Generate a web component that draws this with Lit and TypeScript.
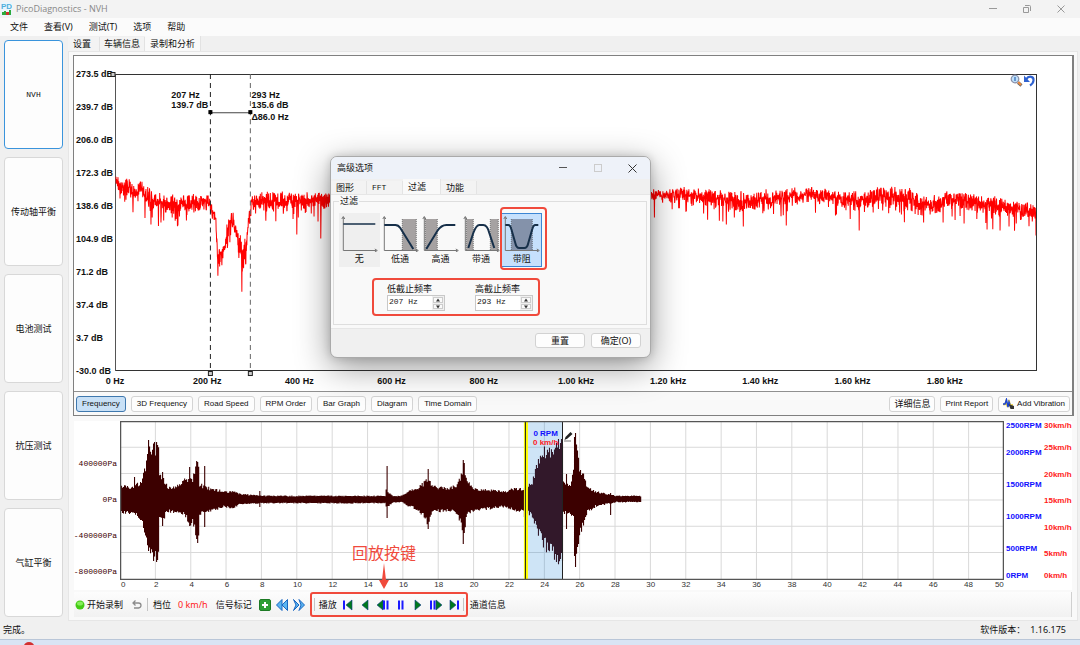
import { LitElement, html, css, svg } from "lit";
import { customElement, property } from "lit/decorators.js";
import { classMap } from "lit/directives/class-map.js";

type Knot = [number, number, number];

/** Small seeded generator, so that the traces look the same on every load. */
function seeded(seed: number) {
  let s = seed;
  return () => {
    s = (s * 1664525 + 1013904223) % 4294967296;
    return s / 4294967296;
  };
}

function sample(knots: Knot[], x: number): [number, number] {
  for (let i = 1; i < knots.length; i++) {
    if (x <= knots[i][0]) {
      const a = knots[i - 1];
      const b = knots[i];
      const t = (x - a[0]) / (b[0] - a[0] || 1);
      return [a[1] + (b[1] - a[1]) * t, a[2] + (b[2] - a[2]) * t];
    }
  }
  const last = knots[knots.length - 1];
  return [last[1], last[2]];
}

/* Spectrum: position, mean level, spread. */
const SPECTRUM: Knot[] = [
  [0, 106, 7], [5, 112, 8], [10, 108, 9], [16, 116, 8], [21, 119, 7], [25, 108, 8], [29, 120, 8],
  [38, 124, 8], [50, 128, 8], [70, 127, 8], [92, 127, 7], [97, 134, 7], [100, 148, 7],
  [102, 186, 7], [105, 176, 12], [109, 170, 10], [112, 152, 8], [116, 140, 8], [118, 148, 6],
  [121, 158, 9], [125, 176, 14], [129, 178, 14], [131, 165, 10], [133, 146, 9], [136, 126, 8],
  [150, 125, 8], [170, 125, 7], [195, 124, 7], [225, 126, 8], [300, 124, 7], [450, 123, 6],
  [540, 120, 5], [566, 119, 6], [585, 121, 6], [606, 124, 8], [645, 126, 9], [668, 121, 7],
  [690, 119, 6], [710, 120, 6], [745, 125, 7], [766, 119, 8], [786, 122, 9], [806, 127, 9],
  [823, 129, 7], [830, 122, 6], [850, 126, 8], [876, 129, 8], [896, 133, 8], [905, 136, 8],
  [922, 134, 8],
];
const DROPS: [number, number][] = [
  [126, 217], [102, 201], [181, 160], [205, 164], [539, 143], [611, 150], [628, 152], [671, 151],
  [744, 156], [828, 148], [849, 149], [872, 155], [885, 156], [921, 161], [62, 151], [35, 150],
];

function spectrumPath(): string {
  const rnd = seeded(77);
  let d = "";
  for (let x = 0; x <= 921.5; x += 0.25) {
    const [mean, spread] = sample(SPECTRUM, x);
    let y = mean + 1 + (rnd() + rnd() - 1) * spread * 1.35;
    if (rnd() > 0.92) y = mean + spread + rnd() * rnd() * 19;
    const drop = DROPS.find((p) => p[0] === x);
    if (drop) y = drop[1];
    d += `${x === 0 ? "M" : "L"}${x} ${y.toFixed(1)}`;
  }
  return d;
}

/* Sound pressure: position, upper edge, lower edge. */
const PRESSURE: Knot[] = [
  [0, 66, 91], [8, 67, 91], [14, 65, 91], [19, 63, 96], [22, 59, 100], [26, 45, 115], [28, 33, 127],
  [30, 36, 128], [33, 30, 134], [37, 28, 138], [38, 34, 129], [39, 57, 95], [42, 57, 99],
  [46, 65, 90], [50, 68, 90], [59, 65, 90], [64, 60, 93], [68, 61, 99], [70, 58, 105],
  [72, 60, 96], [75, 46, 112], [78, 48, 112], [79, 64, 92], [84, 67, 90], [94, 69, 88],
  [104, 71, 85], [112, 71, 87], [119, 73, 83], [139, 75, 82], [264, 75, 82], [265, 70, 86],
  [268, 72, 84], [272, 75, 81], [280, 75, 81], [289, 70, 85], [297, 68, 88], [304, 62, 96],
  [307, 56, 104], [311, 66, 90], [324, 68, 89], [334, 66, 89], [339, 59, 98], [342, 48, 112],
  [346, 62, 92], [354, 69, 88], [369, 70, 87], [384, 71, 85], [394, 68, 89], [404, 69, 89],
  [411, 62, 94], [416, 46, 108], [422, 32, 120], [428, 32, 127], [435, 26, 134], [441, 18, 136],
  [442, 62, 90], [449, 64, 92], [452, 50, 98], [454, 16, 142], [456, 33, 125], [459, 53, 108],
  [463, 58, 101], [466, 67, 90], [474, 71, 85], [484, 73, 83], [494, 75, 81], [520, 75, 81],
];
const PEAKS: Record<number, [number, number]> = {
  28: [19, 130], 36: [21, 141], 37: [24, 139], 42: [51, 105], 69: [46, 105], 76: [40, 118],
  77: [41, 122], 84: [45, 106], 266: [45, 97], 307: [48, 108], 342: [39, 123], 343: [42, 112],
  435: [22, 141], 440: [18, 132], 439: [22, 138], 445: [53, 108], 454: [12, 146], 453: [16, 135],
  139: [70, 86], 14: [56, 92], 489: [72, 94], 403: [67, 96],
};

function pressurePath(): string {
  const rnd = seeded(5);
  let d = "";
  for (let x = 0; x < 520; x++) {
    const [top, bottom] = sample(PRESSURE, x);
    const peak = PEAKS[x];
    const jag = (bottom - top) * 0.16;
    const hi = peak ? peak[0] : top + (rnd() - 0.6) * jag;
    const lo = peak ? peak[1] : bottom - (rnd() - 0.6) * jag;
    d += `M${x + 0.5} ${hi.toFixed(1)}V${lo.toFixed(1)}`;
  }
  return d;
}

const SANS = css`"Noto Sans", "Noto Sans CJK SC", sans-serif`;

@customElement("frequency-plot")
export class FrequencyPlot extends LitElement {
  static styles = css`
    :host { display: grid; grid-template-columns: 41px 1fr 35px; grid-template-rows: 1fr 20px; padding-top: 18px; background: #fff; font: bold 9px/10px "Liberation Sans", sans-serif; color: #111; }
    .levels { display: flex; flex-direction: column; justify-content: space-between; padding-left: 2px; white-space: nowrap; }
    .levels span { height: 0; display: flex; align-items: center; }
    .plot { position: relative; min-height: 0; border-left: 1px solid #555; }
    svg.trace { position: absolute; inset: 0; width: 100%; height: 100%; overflow: visible; }
    .hz { grid-column: 2; display: flex; justify-content: space-between; align-items: center; }
    .hz span { width: 0; display: flex; justify-content: center; white-space: nowrap; }
    .note { position: absolute; top: 16px; white-space: nowrap; }
    .note p { margin: 0; }
    .low { left: 6%; }
    .high { left: 14.7%; }
    .delta { padding-top: 2px; }
    .tools { position: absolute; top: 0; right: 1px; display: flex; }
    .tools button { border: 0; padding: 0; background: none; width: 13px; height: 13px; }
    .tools svg { display: block; }
  `;

  render() {
    const levels = ["273.5 dB", "239.7 dB", "206.0 dB", "172.3 dB", "138.6 dB", "104.9 dB", "71.2 dB", "37.4 dB", "3.7 dB", "-30.0 dB"];
    const hz = ["0 Hz", "200 Hz", "400 Hz", "600 Hz", "800 Hz", "1.00 kHz", "1.20 kHz", "1.40 kHz", "1.60 kHz", "1.80 kHz", ""];
    return html`
      <div class="levels">${levels.map((l) => html`<span>${l}</span>`)}</div>
      <div class="plot">
        <svg class="trace" viewBox="0 0 922 296" preserveAspectRatio="none" aria-hidden="true">
          <path d=${spectrumPath()} fill="none" stroke="#f00" stroke-width="1" stroke-linejoin="bevel" />
          <path d="M0 .5H921.5V296M0 295.5H922" fill="none" stroke="#333" />
          <path d="M94.500 0V296" stroke="#222" stroke-dasharray="5 4" />
          <path d="M134.500 0V296" stroke="#666" stroke-dasharray="5 4" />
          <path d="M95 38.500H134" stroke="#444" />
          <rect x="92.500" y="36" width="4" height="4" /><rect x="132.500" y="36" width="4" height="4" />
          <g fill="#ccc" stroke="#222"><rect x="-5" y="-1.500" width="4" height="4" /><rect x="92.500" y="296.500" width="4" height="4" /><rect x="132.500" y="296.500" width="4" height="4" /></g>
        </svg>
        <div class="note low"><p>207 Hz</p><p>139.7 dB</p></div>
        <div class="note high"><p>293 Hz</p><p>135.6 dB</p><p class="delta">Δ86.0 Hz</p></div>
        <div class="tools">
          <button aria-label="缩放"><svg width="13" height="13" viewBox="0 0 13 13"><path d="M8 8.500l3.500 3" stroke="#666" stroke-width="3"/><path d="M8 8l3 3" stroke="#f08a3c" stroke-width="2"/><circle cx="5" cy="5" r="3.800" fill="#bfe0fa" stroke="#8a90a8" stroke-width="1.200"/><path d="M5 3v4" stroke="#3a70b8" stroke-width="1.300"/></svg></button>
          <button aria-label="撤销"><svg width="13" height="13" viewBox="0 0 13 13"><path d="M3 5.500C6 1 11 2.500 10.500 6.500Q10.200 9.500 7 11.500" fill="none" stroke="#2f62d0" stroke-width="2.200"/><path d="M1 1.500V8h6z" fill="#2f62d0"/></svg></button>
        </div>
      </div>
      <div></div>
      <div class="hz">${hz.map((l) => html`<span>${l}</span>`)}</div>`;
  }
}

@customElement("time-plot")
export class TimePlot extends LitElement {
  static styles = css`
    :host { display: grid; grid-template-columns: 46px 1fr 68px; grid-template-rows: 159px 10px; background: #fff; }
    .pa { display: flex; flex-direction: column; justify-content: space-between; padding: 42px 3px 8px 0; font: 8px/9px "Liberation Mono", monospace; color: #3c0000; }
    .pa span { height: 0; display: flex; align-items: center; justify-content: flex-end; white-space: nowrap; }
    .plot { position: relative; }
    svg.trace { display: block; width: 100%; height: 100%; }
    .seconds { grid-column: 2; display: flex; justify-content: space-between; font: 8px/10px "Liberation Sans", sans-serif; color: #333; }
    .seconds span { width: 0; display: flex; justify-content: center; }
    .seconds span:first-child { justify-content: flex-start; padding-left: 1px; }
    .seconds span:last-child { justify-content: flex-end; }
    .scales { display: grid; grid-template-columns: 1fr 28px; padding-left: 2px; font: bold 8px/9px "Liberation Sans", sans-serif; }
    .scale { display: flex; flex-direction: column; justify-content: space-between; }
    .scale span { height: 0; display: flex; align-items: center; }
    .scale span:first-child { align-items: flex-start; }
    .scale span:last-child { align-items: flex-end; }
    .rpm, .scale.rpm { color: #1010ff; }
    .kmh { color: #ff1a1a; }
    .reading { position: absolute; left: 46%; top: 8px; width: 38px; font: bold 8px/9px "Liberation Sans", sans-serif; text-align: center; white-space: nowrap; }
    .reading p { margin: 0; }
    .hint { position: absolute; left: 232px; top: 122px; width: 64px; display: flex; flex-direction: column; align-items: center; color: #f04a3c; font: 16px/20px ${SANS}; white-space: nowrap; }
  `;

  render() {
    const grid: unknown[] = [];
    for (let i = 1; i < 25; i++) grid.push(svg`<path d="M${(i * 35.28).toFixed(1)} 0V158"/>`);
    for (let i = 1; i < 6; i++) grid.push(svg`<path d="M0 ${(i * 26.3).toFixed(1)}H882"/>`);
    const seconds = Array.from({ length: 26 }, (_, i) => i * 2);
    return html`
      <div class="pa"><span>400000Pa</span><span>0Pa</span><span>-400000Pa</span><span>-800000Pa</span></div>
      <div class="plot">
        <svg class="trace" viewBox="0 0 882 159" preserveAspectRatio="none" aria-hidden="true">
          <g stroke="#d9d9d9">${grid}</g>
          <path d=${pressurePath()} stroke="#3c0000" stroke-width="1.100" fill="none" />
          <rect x="407" y="1" width="35" height="157" fill="#0a78d0" opacity=".2" />
          <rect x="403" y="1" width="4" height="158" fill="#ff0" />
          <path d="M404.500 1V158M441.500 1V158" stroke="#222" />
          <path d="M.5 159V.5H881.500V158.500H0" fill="none" stroke="#555" stroke-width="1.500" />
          <path d="M443.500 19l1-3 5-5 2 2-5 4.500z" fill="#222" /><path d="M443 20h7" stroke="#777" />
        </svg>
        <div class="reading"><p class="rpm">0 RPM</p><p class="kmh">0 km/h</p></div>
        <div class="hint">回放按键<svg width="10" height="26" viewBox="0 0 10 26"><path d="M5 0L7 17H10L5 26 0 17H3z" fill="#f04a3c" /></svg></div>
      </div>
      <div class="scales">
        <div class="scale rpm">${[2500, 2000, 1500, 1000, 500, 0].map((v) => html`<span>${v}RPM</span>`)}</div>
        <div class="scale kmh">${[30, 25, 20, 15, 10, 5, 0].map((v) => html`<span>${v}km/h</span>`)}</div>
      </div>
      <div class="seconds">${seconds.map((s) => html`<span>${s}</span>`)}</div>`;
  }
}

const BARS = svg`<path d="M1 1.500V10.500M4.500 1.500V10.500" stroke="#1a1aff" stroke-width="2"/>`;
const TRANSPORT: [string, unknown][] = [
  ["跳到开头", svg`<path d="M2 1.500V10.500" stroke="#1a1aff" stroke-width="2"/><path d="M10 1V11L4 6z" fill="#007a1c" stroke="#123a8a" stroke-width=".6"/>`],
  ["倒放", svg`<path d="M9 1V11L3 6z" fill="#007a1c" stroke="#123a8a" stroke-width=".6"/>`],
  ["后退一步", svg`<path d="M6 1V11L0 6z" fill="#007a1c" stroke="#123a8a" stroke-width=".6"/><g transform="translate(6)">${BARS}</g>`],
  ["暂停", svg`<g transform="translate(3)">${BARS}</g>`],
  ["播放", svg`<path d="M3 1V11L9 6z" fill="#007a1c" stroke="#123a8a" stroke-width=".6"/>`],
  ["前进一步", svg`<g>${BARS}</g><path d="M6 1V11L12 6z" fill="#007a1c" stroke="#123a8a" stroke-width=".6"/>`],
  ["跳到结尾", svg`<path d="M2 1V11L8 6z" fill="#007a1c" stroke="#123a8a" stroke-width=".6"/><path d="M10 1.500V10.500" stroke="#1a1aff" stroke-width="2"/>`],
];

@customElement("playback-bar")
export class PlaybackBar extends LitElement {
  static styles = css`
    :host { display: flex; align-items: center; height: 25px; font: 9px/12px ${SANS}; color: #111; background: linear-gradient(#fdfdfd, #f1f1f1); border-right: 1px solid #d0d0d0; }
    button { font: inherit; color: inherit; border: 0; background: none; padding: 0; display: flex; align-items: center; white-space: nowrap; }
    svg { display: block; flex: none; }
    .record { gap: 2px; padding-left: 1px; }
    .undo { margin-left: 9px; }
    .sep { width: 1px; height: 13px; background: #c4c4c4; }
    .undo + .sep { margin: 0 5px; }
    .speed { color: #f22; margin: 0 8px 0 7px; }
    .mark { margin-right: 7px; }
    .jump { margin-right: 5px; }
    .group { box-sizing: border-box; width: 158px; height: 25px; border: 2px solid #f04a3c; border-radius: 3px; display: flex; align-items: center; padding: 0 2px; white-space: nowrap; }
    .group > span { margin: 0 2px 0 4px; }
    .group button { flex: 1; justify-content: center; }
    .info { margin-left: 2px; }
  `;

  render() {
    return html`
      <button class="record"><svg width="10" height="10" viewBox="0 0 10 10"><circle cx="5" cy="5" r="4.500" fill="#44cc14"/><ellipse cx="5" cy="3.500" rx="3" ry="2" fill="#86ee5a"/></svg>开始录制</button>
      <button class="undo" aria-label="撤销"><svg width="10" height="10" viewBox="0 0 10 10"><path d="M1 3H6.500Q9 3 9 5.300T6.500 8H2M3.500.5L1 3l2.500 2.500" fill="none" stroke="#8c8c8c" stroke-width="1.300"/></svg></button>
      <i class="sep"></i>
      <span>档位</span><span class="speed">0 km/h</span><span class="mark">信号标记</span>
      <button class="jump" aria-label="添加标记"><svg width="12" height="12" viewBox="0 0 12 12"><rect x=".5" y=".5" width="11" height="11" rx="1.500" fill="#2e9e34" stroke="#1c7a24"/><path d="M6 3V9M3 6H9" stroke="#fff" stroke-width="2"/></svg></button>
      <button class="jump" aria-label="上一个标记"><svg width="12" height="12" viewBox="0 0 12 12"><path d="M6 .5V11.500L.5 6zM11.500 .5V11.500L6 6z" fill="#5ab4f0" stroke="#1a66c0"/></svg></button>
      <button class="jump" aria-label="下一个标记"><svg width="12" height="12" viewBox="0 0 12 12"><path d="M.5 .5L6 6 .5 11.500 3 6zM6 .5L11.500 6 6 11.500 8 6z" fill="#5ab4f0" stroke="#1a66c0"/></svg></button>
      <div class="group"><i class="sep"></i><span>播放</span>
        ${TRANSPORT.map(([name, icon]) => html`<button aria-label=${name}><svg width="12" height="12" viewBox="0 0 12 12">${icon}</svg></button>`)}
        <i class="sep"></i></div>
      <span class="info">通道信息</span>`;
  }
}

@customElement("filter-button")
export class FilterButton extends LitElement {
  @property() label = "";
  @property() kind = "none";
  @property({ type: Boolean, reflect: true }) selected = false;

  static styles = css`
    :host { display: block; flex: 1; position: relative; }
    button { box-sizing: border-box; width: 100%; height: 54px; padding: 0; border: 0; background: none; font: 9px/14px ${SANS}; color: #111; display: block; text-align: center; }
    svg { display: block; width: 100%; height: 38px; }
    .plain { background: #efefef; }
    .on { background: #c6e0fc; box-shadow: inset 0 0 0 1px #3c86d4; }
    .ring { position: absolute; inset: -6px -5px -3px -1px; border: 2px solid #f04a3c; border-radius: 4px; pointer-events: none; }
  `;

  render() {
    const shapes: Record<string, { bands: [number, number][]; curve: string }> = {
      none: { bands: [], curve: "M4 10H36" },
      low: { bands: [[22, 36]], curve: "M4 11H15Q18 11 20 14L33 35" },
      high: { bands: [[5, 17]], curve: "M6 35L17 17Q21 11 26 11H35" },
      pass: { bands: [[5, 12], [29, 37]], curve: "M7 34L12 19Q15 11 18 11H22Q26 11 28 19L33 34" },
      stop: { bands: [[10, 31]], curve: "M4 11H7Q9 11 10 15L14 29Q15 34 18 34H23Q26 34 27 29L31 15Q32 11 34 11H37" },
    };
    const { bands, curve } = shapes[this.kind];
    return html`<button class=${classMap({ plain: this.kind === "none", on: this.selected })} aria-pressed=${this.selected ? "true" : "false"}>
        <svg viewBox="0 0 40 38">
          ${bands.map(([a, b]) => svg`<rect x=${a} y="5" width=${b - a} height="31" fill=${this.selected ? "#8492aa" : "#a6a2a2"}/><path d="M${a} 5V36M${b} 5V36" stroke="#555" stroke-width=".7" stroke-dasharray="1 1"/>`)}
          <path d="M4 3V36.500H37M2.500 5L4 2.500 5.500 5M35.500 35L38 36.500 35.500 38" fill="none" stroke="#777"/>
          <path d=${curve} fill="none" stroke="#17304a" stroke-width=${this.kind === "none" ? 1.5 : 2}/>
        </svg>${this.label}</button>
      ${this.selected ? html`<i class="ring"></i>` : null}`;
  }
}

@customElement("options-dialog")
export class OptionsDialog extends LitElement {
  static styles = css`
    :host { display: block; width: 321px; border: 1px solid #aaa; box-sizing: border-box; border-radius: 7px; overflow: hidden; background: #f0f0f0; box-shadow: 0 9px 34px rgba(0, 0, 0, .42), 0 0 8px rgba(0, 0, 0, .16); font: 9px/12px ${SANS}; color: #111; }
    button { font: inherit; color: inherit; padding: 0; }
    header { display: flex; align-items: center; height: 22px; padding-left: 6px; background: #eef2f9; }
    header span { flex: 1; }
    header button { width: 35px; height: 22px; border: 0; background: none; display: grid; place-items: center; }
    .tabs { display: flex; align-items: flex-end; height: 15px; background: #f0f0f0; }
    .tabs button { box-sizing: border-box; height: 13px; border: 0; border-right: 1px solid #e4e4e4; background: #f3f3f3; width: 36px; text-align: left; padding-left: 5px; }
    .tabs .current { height: 15px; width: 38px; background: #f9f9f9; }
    .tabs .mono { font-family: "Liberation Mono", monospace; font-size: 8px; }
    .page { background: #f9f9f9; border-top: 1px solid #e6e6e6; border-bottom: 1px solid #e6e6e6; padding: 0 3px 3px 2px; }
    fieldset { margin: 0; padding: 6px 0 8px 5px; border: 1px solid #dedede; min-width: 0; }
    legend { padding: 0 1px; margin: 0; }
    .filters { display: flex; width: 203px; padding-bottom: 3px; }
    .limits { box-sizing: border-box; display: flex; justify-content: space-between; width: 168px; height: 38px; margin: 8px 0 0 33px; padding: 2px 3px 2px 13px; border: 2px solid #f04a3c; border-radius: 4px; }
    .limit { width: 60px; }
    label { display: block; white-space: nowrap; line-height: 13px; }
    .spin { display: flex; height: 16px; width: 58px; box-sizing: border-box; border: 1px solid #c8c8c8; background: #fff; }
    input { flex: 1; min-width: 0; border: 0; padding: 0 0 2px 1px; font: 8px/12px "Liberation Mono", monospace; color: #222; background: none; outline: 0; }
    .steps { width: 10px; display: flex; flex-direction: column; gap: 1px; padding: 1px; background: #f0f0f0; }
    .steps button { flex: 1; border: 1px solid #ccc; background: #fafafa; display: grid; place-items: center; min-height: 0; }
    footer { display: flex; justify-content: flex-end; gap: 6px; padding: 4px 9px 9px; }
    footer button { width: 50px; height: 15px; border: 1px solid #d2d2d2; border-radius: 3px; background: #fdfdfd; line-height: 12px; }
    svg { display: block; }
  `;

  private spin(id: string, name: string, value: string) {
    return html`<div class="limit"><label for=${id}>${name}</label>
      <div class="spin"><input id=${id} .value=${value} />
        <div class="steps">
          <button aria-label="增加"><svg width="6" height="4" viewBox="0 0 6 4"><path d="M3 .5L5 3.500H1z" fill="#333"/></svg></button>
          <button aria-label="减少"><svg width="6" height="4" viewBox="0 0 6 4"><path d="M3 3.500L5 .5H1z" fill="#333"/></svg></button>
        </div></div></div>`;
  }

  render() {
    return html`
      <header><span>高级选项</span>
        <button aria-label="最小化"><svg width="8" height="8" viewBox="0 0 8 8"><path d="M0 3.500H8" stroke="#555"/></svg></button>
        <button aria-label="最大化" disabled><svg width="8" height="8" viewBox="0 0 8 8"><rect x=".5" y=".5" width="7" height="7" fill="none" stroke="#ccc"/></svg></button>
        <button aria-label="关闭"><svg width="9" height="9" viewBox="0 0 9 9"><path d="M.5 .5L8.500 8.500M8.500 .5L.5 8.500" stroke="#333"/></svg></button>
      </header>
      <div class="tabs" role="tablist">
        <button role="tab">图形</button><button role="tab" class="mono">FFT</button><button role="tab" class="current">过滤</button><button role="tab">功能</button>
      </div>
      <div class="page"><fieldset><legend>过滤</legend>
        <div class="filters">
          <filter-button label="无" kind="none"></filter-button>
          <filter-button label="低通" kind="low"></filter-button>
          <filter-button label="高通" kind="high"></filter-button>
          <filter-button label="带通" kind="pass"></filter-button>
          <filter-button label="带阻" kind="stop" selected></filter-button>
        </div>
        <div class="limits">${this.spin("low", "低截止频率", "207 Hz")}${this.spin("high", "高截止频率", "293 Hz")}</div>
      </fieldset></div>
      <footer><button>重置</button><button>确定(O)</button></footer>`;
  }
}

@customElement("app-root")
export class AppRoot extends LitElement {
  static styles = css`
    :host { display: flex; flex-direction: column; min-height: 100vh; position: relative; overflow: hidden; background: #f0f0f0; font: 9px/12px ${SANS}; color: #111; }
    button { font: inherit; color: inherit; padding: 0; }
    svg { display: block; flex: none; }
    .title { display: flex; align-items: center; height: 18px; background: #f3f3f3; color: #888; gap: 4px; padding-left: 1px; font-family: "Open Sans", sans-serif; }
    .title span { flex: 1; }
    .title button { width: 30px; height: 16px; border: 0; background: none; color: #888; display: grid; place-items: center; }
    .title button:last-child { margin-right: 4px; }
    .menu { display: flex; height: 18px; align-items: center; background: #fbfbfb; padding-left: 10px; gap: 16px; }
    .menu button { border: 0; background: none; }
    .body { flex: 1; display: grid; grid-template-columns: 68px 1fr; }
    .side { display: flex; flex-direction: column; gap: 8px; padding: 4px 5px 4px 4px; }
    .side button { flex: 1; background: #fdfdfd; border: 1px solid #d8d8d8; border-radius: 4px; }
    .side .active { border-color: #3a94dc; }
    .side .mono { font: 8px/12px "Liberation Mono", monospace; }
    .main { display: flex; flex-direction: column; min-width: 0; padding-right: 2px; }
    .tabs { display: flex; align-items: flex-end; height: 15px; }
    .tabs button { height: 14px; border: 0; border-right: 1px solid #e2e2e2; background: #f3f3f3; padding: 0 4px; }
    .tabs .settings { padding: 0 8px 0 5px; }
    .tabs .current { height: 15px; background: #f9f9f9; padding: 0 5px; }
    .panel { flex: 1; display: flex; flex-direction: column; background: #f9f9f9; border: 1px solid #e6e6e6; padding: 3px 3px 3px 4px; }
    .frame { flex: 1; display: flex; flex-direction: column; border: 1px solid #808080; border-right-width: 2px; }
    frequency-plot { flex: 1; }
    .views { display: flex; align-items: center; gap: 5px; height: 23px; padding: 0 2px; border-top: 1px solid #909090; font: 8px/12px "Liberation Sans", sans-serif; }
    .views button { height: 14px; border: 1px solid #d4d4d4; border-radius: 3px; background: #fdfdfd; padding: 0 4px; display: flex; align-items: center; justify-content: center; gap: 3px; white-space: nowrap; box-sizing: content-box; }
    .views .view { padding: 0 5px; }
    .views .active { background: #c8e0f6; border-color: #3f78ae; }
    .views .detail { margin-left: auto; font: 9px/12px ${SANS}; }
    time-plot { margin: 5px 2px 2px 1px; }
    playback-bar { margin: 0 2px 0 1px; }
    .status { display: flex; justify-content: space-between; align-items: center; height: 18px; padding: 0 14px 0 3px; }
    .status b { font-weight: normal; padding-left: 5px; }
    .taskbar { height: 6px; box-sizing: border-box; background: #d9e4f4; border-top: 1px solid #b9c6d8; padding-left: 24px; }
    options-dialog { position: absolute; left: 330px; top: 156px; }
  `;

  render() {
    const modules = ["NVH", "传动轴平衡", "电池测试", "抗压测试", "气缸平衡"];
    const views = ["Frequency", "3D Frequency", "Road Speed", "RPM Order", "Bar Graph", "Diagram", "Time Domain"];
    return html`
      <header class="title">
        <svg width="11" height="14" viewBox="0 0 11 14"><rect width="11" height="14" fill="#eaf6fd"/><text x="0" y="7" font-size="8" font-weight="bold" font-family="Liberation Sans" fill="#4fb0dc">PD</text><path d="M1 13V10H3V9H5V13z" fill="#2eaa3c"/><path d="M5 13V10H8V13z" fill="#d03030"/><path d="M8 13V8H10V13z" fill="#2eaa3c"/></svg>
        <span>PicoDiagnostics - NVH</span>
        <button aria-label="最小化"><svg width="8" height="8" viewBox="0 0 8 8"><path d="M0 3.500H8" stroke="#999"/></svg></button>
        <button aria-label="还原"><svg width="8" height="8" viewBox="0 0 8 8"><path d="M.5 2.500H5.500V7.500H.5zM2 .5H6.500Q7.500 .5 7.500 1.500V6" fill="none" stroke="#999"/></svg></button>
        <button aria-label="关闭"><svg width="8" height="8" viewBox="0 0 8 8"><path d="M.5 .5L7.500 7.500M7.500 .5L.5 7.500" stroke="#999"/></svg></button>
      </header>
      <nav class="menu">${["文件", "查看(V)", "测试(T)", "选项", "帮助"].map((m) => html`<button>${m}</button>`)}</nav>
      <div class="body">
        <nav class="side">${modules.map((m, i) => html`<button class=${classMap({ active: i === 0, mono: i === 0 })}>${m}</button>`)}</nav>
        <main class="main">
          <div class="tabs" role="tablist"><button role="tab" class="settings">设置</button><button role="tab">车辆信息</button><button role="tab" class="current">录制和分析</button></div>
          <div class="panel">
            <section class="frame">
              <frequency-plot></frequency-plot>
              <div class="views">
                ${views.map((v, i) => html`<button class=${classMap({ view: true, active: i === 0 })}>${v}</button>`)}
                <button class="detail">详细信息</button><button>Print Report</button>
                <button><svg width="11" height="11" viewBox="0 0 11 11"><path d="M0 6.500H2L3 3 4.500 9 6 2 7 7H10" fill="none" stroke="#e8c820" stroke-width="1.500"/><path d="M0 6H2L3.500 1.500 5 9 6 4 7 6.500" fill="none" stroke="#1a44d8" stroke-width="1.400"/><path d="M5.500 6L11 8V11H7.500z" fill="#333"/></svg>Add Vibration</button>
              </div>
            </section>
            <time-plot></time-plot>
            <playback-bar></playback-bar>
          </div>
        </main>
      </div>
      <footer class="status"><span>完成。</span><span>软件版本：<b>1.16.175</b></span></footer>
      <div class="taskbar"><svg width="10" height="5" viewBox="0 0 10 5"><ellipse cx="5" cy="6" rx="5" ry="4" fill="#d23030"/></svg></div>
      <options-dialog></options-dialog>`;
  }
}
